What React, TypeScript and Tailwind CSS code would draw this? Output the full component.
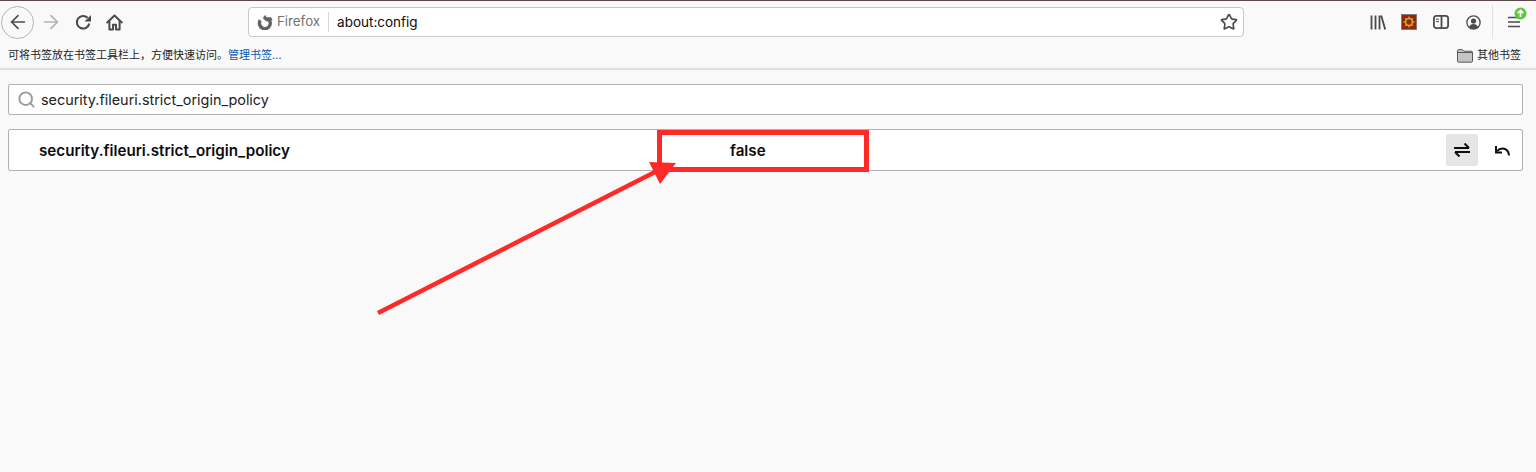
import { Star, ArrowLeft, ArrowRight, Search } from 'lucide-react'

const CJK = { fontFamily: 'Inter, "Noto Sans CJK SC", sans-serif' }

function ReloadIcon() {
  return (
    <svg width="17" height="17" viewBox="0 0 17 17" fill="none">
      <path d="M14.300 9.500A6.300 6.300 0 1 1 12.600 3.800" stroke="#4a4a4f" strokeWidth="2.100" />
      <path d="M16 1v6.500H9.500z" fill="#4a4a4f" />
    </svg>
  )
}

function HomeIcon() {
  return (
    <svg width="17" height="17" viewBox="0 0 17 17" fill="none" stroke="#4a4a4f" strokeWidth="2" strokeLinejoin="round">
      <path d="M1.200 8.400 8.500 1.600l7.300 6.800" strokeLinecap="round" />
      <path d="M3.400 7v8.400h3.600v-4.600h3v4.600h3.600V7" />
    </svg>
  )
}

function FirefoxIcon() {
  return (
    <svg width="16" height="16" viewBox="0 0 16 16" fill="none">
      <path d="M10 4.300A5.400 5.400 0 1 1 3.300 6.300" stroke="#636366" strokeWidth="3.400" />
      <path d="M8.500.8c-.3 1.500 1 3 3 3 .8 0 1.400-.4 1.800-1 1.100.9 1.900 2 2.200 3.400L9.500 7.500 6 4.500C6.500 2.900 7.400 1.600 8.500.8z" fill="#636366" />
    </svg>
  )
}

function LibraryIcon() {
  return (
    <svg width="16" height="15" viewBox="0 0 16 15" fill="none" stroke="#4a4a4f" strokeWidth="1.800">
      <path d="M1.500 0.500v14M5.500 0.500v14M9.500 0.500v14M11.200 0.500l4 14" />
    </svg>
  )
}

function ExtensionIcon() {
  return (
    <svg width="16" height="16" viewBox="0 0 16 16">
      <rect x="0.500" y="0.500" width="15" height="15" fill="#8a2a10" stroke="#8b7a72" />
      <circle cx="8" cy="8" r="3.400" fill="none" stroke="#e8a21f" strokeWidth="1.500" />
      <path d="M8 2.500v2M8 11.500v2M2.500 8h2M11.500 8h2M4.200 4.200l1.300 1.300M10.500 10.500l1.300 1.300M11.800 4.200l-1.300 1.300M5.500 10.500l-1.300 1.300" stroke="#e8a21f" strokeWidth="1.300" />
    </svg>
  )
}

function SidebarIcon() {
  return (
    <svg width="16" height="14" viewBox="0 0 16 14" fill="none" stroke="#4a4a4f">
      <rect x="0.900" y="0.900" width="14.200" height="12.200" rx="2.500" strokeWidth="1.800" />
      <path d="M8.500 1v12" strokeWidth="1.800" />
      <path d="M3 4.200h3M3 6.700h3" strokeWidth="1" />
    </svg>
  )
}

function AccountIcon() {
  return (
    <svg width="15" height="15" viewBox="0 0 15 15" fill="none">
      <circle cx="7.500" cy="7.500" r="6.600" stroke="#4a4a4f" strokeWidth="1.300" />
      <circle cx="7.500" cy="6" r="2.600" fill="#4a4a4f" />
      <path d="M3 12c.8-2 2.500-3 4.500-3s3.700 1 4.500 3a6 6 0 0 1-9 0z" fill="#4a4a4f" />
    </svg>
  )
}

function MenuIcon() {
  return (
    <div className="relative w-[12px] h-[12px]">
      <svg width="12" height="12" viewBox="0 0 12 12" stroke="#4a4a4f" strokeWidth="1.500" className="absolute left-0 top-0">
        <path d="M0 1.500h12M0 6h12M0 10.500h12" />
      </svg>
      <svg width="13" height="13" viewBox="0 0 13 13" className="absolute left-[6px] top-[-9px]">
        <circle cx="6.500" cy="6.500" r="6" fill="#5fc93a" />
        <path d="M6.500 10V3.500M3.700 6.200l2.800-2.800 2.800 2.800" fill="none" stroke="#fff" strokeWidth="1.700" />
      </svg>
    </div>
  )
}

function FolderIcon() {
  return (
    <svg width="16" height="14" viewBox="0 0 16 14">
      <path d="M.5 12V1.800C.5 1.100 1 .6 1.700.6h3.600l1.600 1.600h7.400c.7 0 1.200.5 1.200 1.200V12c0 .7-.5 1.200-1.200 1.200H1.700C1 13.200.5 12.700.5 12z" fill="#c4c4c6" stroke="#59595c" />
      <path d="M.5 3.500h15" stroke="#59595c" />
    </svg>
  )
}

function ToggleIcon() {
  return (
    <svg width="16" height="14" viewBox="0 0 16 14" fill="none" stroke="#0c0c0d" strokeWidth="2">
      <path d="M0 5h15M10.500.5 15 5" />
      <path d="M16 9H1M5.500 13.500 1 9" />
    </svg>
  )
}

function ResetIcon() {
  return (
    <svg width="16" height="11" viewBox="0 0 16 11" fill="none" stroke="#0c0c0d" strokeWidth="2">
      <path d="M15 10.500C15 6.500 12.300 3.500 8.500 3.500c-2.300 0-4 1-5.500 2.700" />
      <path d="M2 1v6.500h6" strokeWidth="1.900" />
    </svg>
  )
}

export default function App() {
  return (
    <div className="relative w-[1536px] h-[472px] overflow-hidden bg-[#f9f9f9] text-[#0c0c0d]" style={CJK}>
      {/* Toolbar */}
      <div className="h-[43px] flex items-center bg-[#f9f9f9] border-t border-[#5a4a4c]">
        <div className="shrink-0 ml-[1px] w-[33px] h-[33px] rounded-full border border-[#b4b4b6] flex items-center justify-center">
          <ArrowLeft size={22} color="#4a4a4f" strokeWidth={1.800} />
        </div>
        <div className="shrink-0 ml-[6px] w-[22px] flex justify-center">
          <ArrowRight size={22} color="#b1b1b3" strokeWidth={1.800} />
        </div>
        <div className="shrink-0 ml-[12px] w-[18px] flex justify-center">
          <ReloadIcon />
        </div>
        <div className="shrink-0 ml-[13px] w-[18px] flex justify-center">
          <HomeIcon />
        </div>

        {/* URL bar */}
        <div className="shrink-0 ml-[125px] w-[996px] h-[30px] bg-white rounded-[4px] border border-[#c8c8ca] flex items-center">
          <div className="ml-[8px]"><FirefoxIcon /></div>
          <span className="ml-[4px] text-[13.300px] text-[#737373]">Firefox</span>
          <div className="ml-[8px] w-px h-[20px] bg-[#d7d7d9]" />
          <span className="ml-[8px] text-[13.500px] text-[#0c0c0d]">about:config</span>
          <div className="ml-auto mr-[5px]">
            <Star size={18} color="#4a4a4f" strokeWidth={2.200} />
          </div>
        </div>

        <div className="shrink-0 ml-[126px]"><LibraryIcon /></div>
        <div className="shrink-0 ml-[15px]"><ExtensionIcon /></div>
        <div className="shrink-0 ml-[16px]"><SidebarIcon /></div>
        <div className="shrink-0 ml-[17px]"><AccountIcon /></div>
        <div className="shrink-0 ml-[11px] w-px h-[34px] bg-[#e0e0e2]" />
        <div className="shrink-0 ml-[15px]"><MenuIcon /></div>
      </div>

      {/* Bookmarks bar */}
      <div className="h-[27px] flex items-center border-b-2 border-[#e0e0e2] pl-[8px] pr-[8px] text-[11px]">
        <span className="text-[#222]">可将书签放在书签工具栏上，方便快速访问。</span>
        <span className="text-[#0a56b5]">管理书签…</span>
        <div className="ml-auto flex items-center gap-[4px] mr-[7px]">
          <FolderIcon />
          <span className="text-[#222]">其他书签</span>
        </div>
      </div>

      {/* Search */}
      <div className="mt-[14px] ml-[8px] mr-[13px] h-[31px] bg-white border border-[#b1b1b3] rounded-[2px] flex items-center pl-[8px]">
        <Search size={19} color="#9a9a9c" strokeWidth={2.400} />
        <span className="ml-[5px] text-[14.400px] text-[#222]">security.fileuri.strict_origin_policy</span>
      </div>

      {/* Pref row */}
      <div className="mt-[14px] ml-[8px] mr-[13px] h-[42px] bg-white border border-[#b1b1b3] rounded-[2px] flex items-center text-[15.200px] font-semibold text-[#0c0c0d]">
        <span className="ml-[30px] w-[691px] shrink-0 pt-[2px]">security.fileuri.strict_origin_policy</span>
        <span className="pt-[2px]">false</span>
        <div className="ml-auto w-[32px] h-[32px] rounded-[2px] bg-[#e5e5e5] flex items-center justify-center">
          <ToggleIcon />
        </div>
        <div className="ml-[16px] mr-[12px]"><ResetIcon /></div>
      </div>

      {/* Red annotation */}
      <div className="absolute left-[657px] top-[130px] w-[212px] h-[42px] border-[5px] border-[#ff2a28]" />
      <svg className="absolute left-0 top-0" width="1536" height="472" viewBox="0 0 1536 472" fill="none">
        <path d="M378 313 655 172" stroke="#ff2a28" strokeWidth="4.500" />
        <path d="M649 162 676 163 660 184z" fill="#ff2a28" />
      </svg>
    </div>
  )
}
